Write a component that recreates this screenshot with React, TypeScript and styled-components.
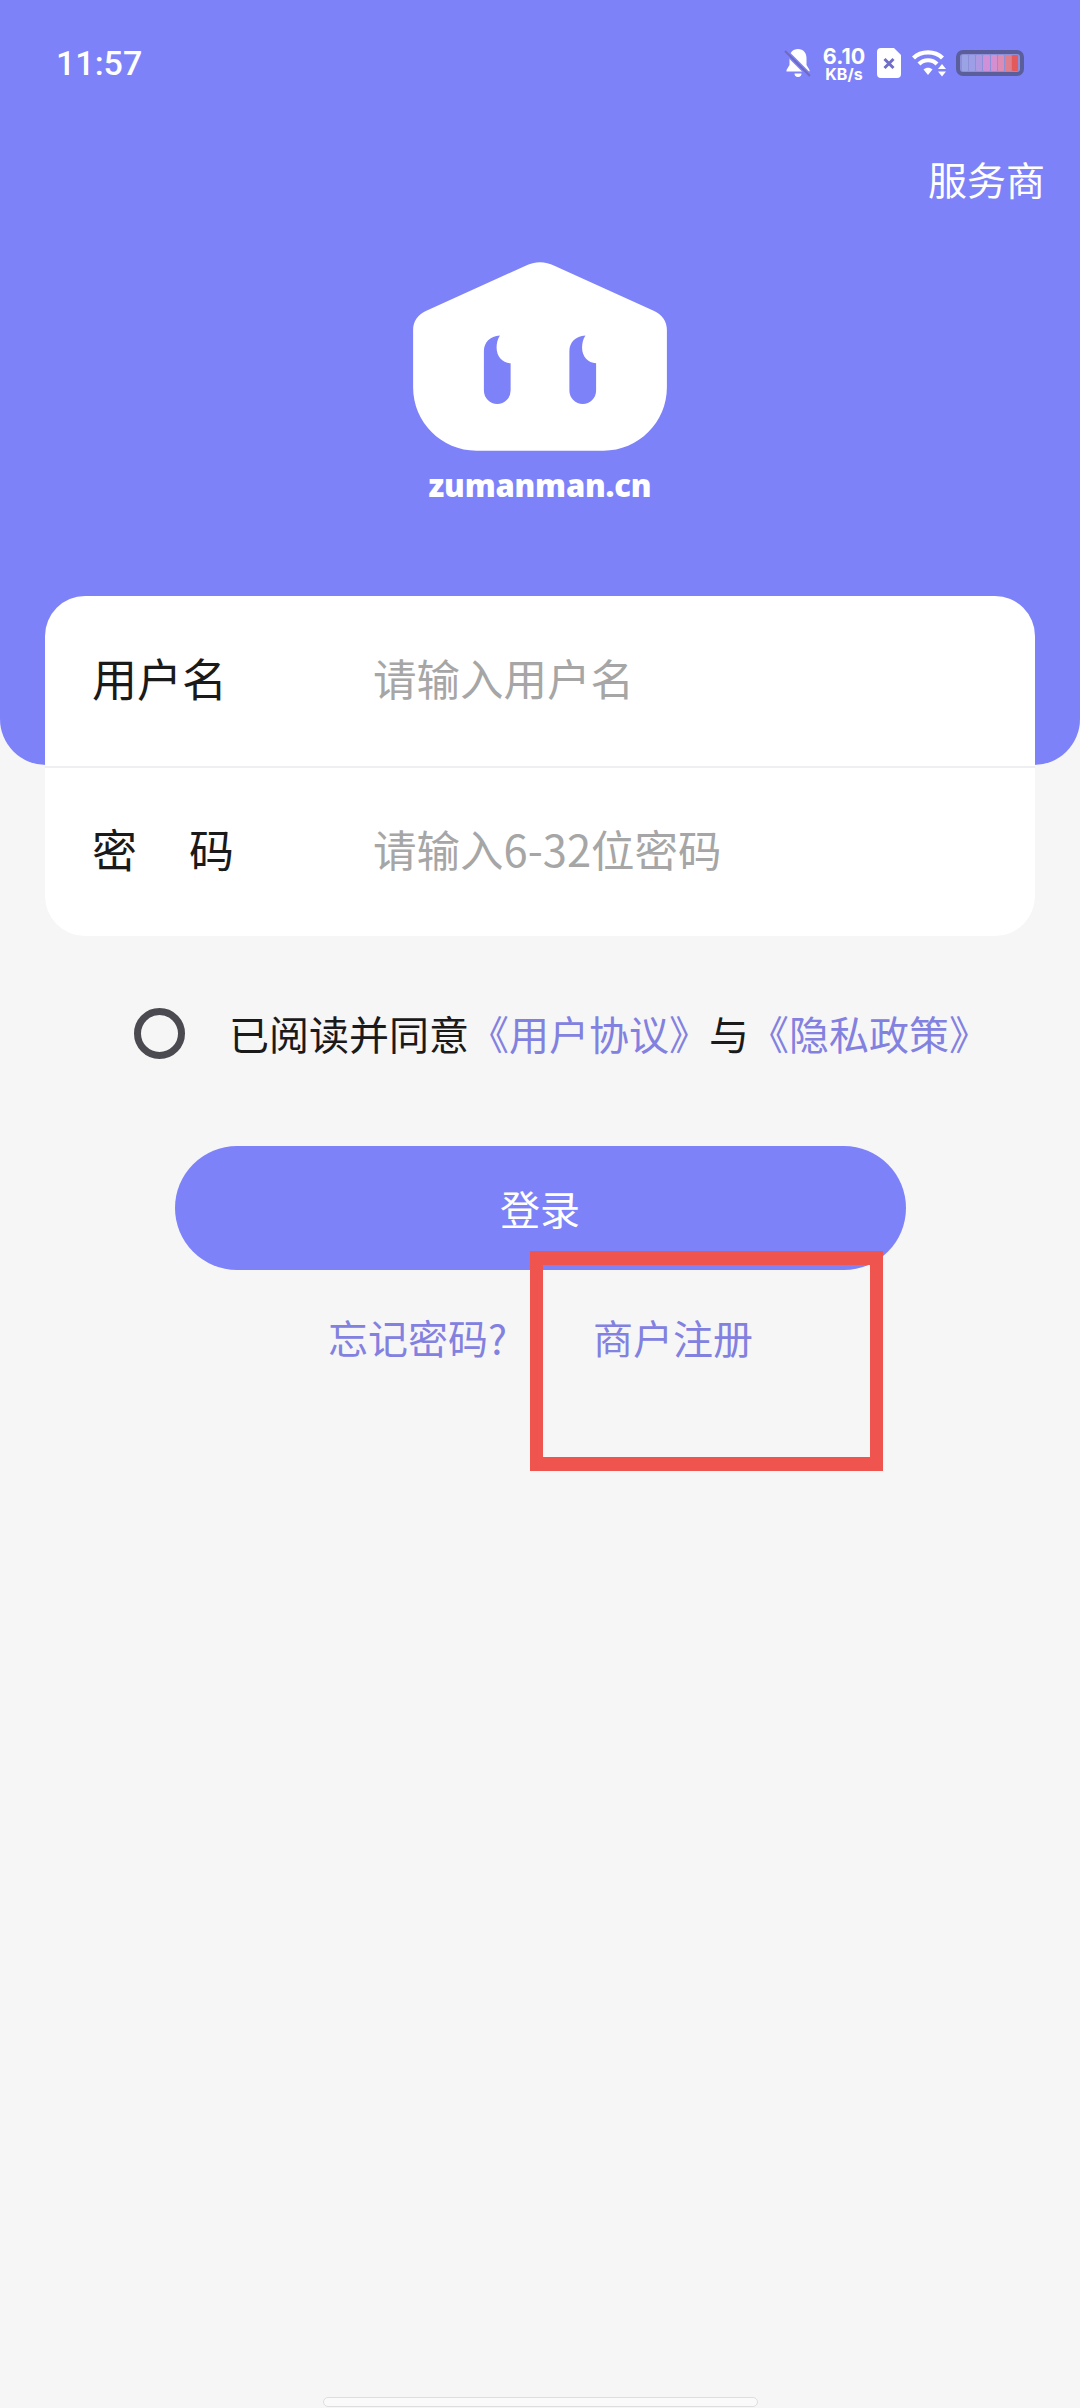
import React from "react";
import styled, { createGlobalStyle } from "styled-components";

const cjk = `"Noto Sans CJK SC", "Noto Sans", sans-serif`;
const brand = "#7e82f9";
const linkColor = "#8381e0";
const batteryCells = ["#9aa4e4", "#9c9fe6", "#ae98e2", "#cf90d8", "#d48fd0", "#dc8cb4", "#e07f8c", "#e4595c"];

const Global = createGlobalStyle`
  html, body { margin: 0; padding: 0; background: #f6f6f7; }
  * { box-sizing: border-box; }
`;

const Page = styled.div`
  position: relative;
  width: 1080px;
  height: 2408px;
  overflow: hidden;
  background: #f6f6f7;
  display: flex;
  flex-direction: column;
  font-family: ${cjk};
`;

const Header = styled.header`
  height: 765px;
  flex: none;
  background: ${brand};
  border-radius: 0 0 46px 46px;
  display: flex;
  flex-direction: column;
`;

const StatusBar = styled.div`
  height: 46px;
  margin-top: 40px;
  padding: 0 56px 0 56px;
  display: flex;
  align-items: center;
  justify-content: space-between;
`;

const Clock = styled.span`
  font: 500 34px/46px Roboto, sans-serif;
  color: #fff;
`;

const StatusIcons = styled.div`
  display: flex;
  align-items: center;
`;

const Speed = styled.div`
  width: 44px;
  margin: 0 11px 0 10px;
  color: #fff;
  font-family: Inter, sans-serif;
  font-weight: 700;
  text-align: center;
  display: flex;
  flex-direction: column;
  align-items: center;
`;

const SpeedValue = styled.span`
  font-size: 21.500px;
  line-height: 22px;
`;

const SpeedUnit = styled.span`
  font-size: 16px;
  line-height: 15px;
`;

const WifiSlot = styled.div`
  margin-left: 10px;
  display: flex;
`;

const Battery = styled.div`
  width: 68px;
  height: 26px;
  margin-left: 9px;
  padding: 1px 2px;
  border: 4px solid #5a5f9c;
  border-radius: 7px;
  background: #8d8fd8;
  display: flex;
  gap: 1px;
`;

const BatteryCell = styled.i<{ $color: string }>`
  flex: 1;
  border-radius: 1px;
  background: ${(p) => p.$color};
`;

const ProviderRow = styled.div`
  margin-top: 64px;
  padding-right: 35px;
  display: flex;
  justify-content: flex-end;
`;

const Provider = styled.span`
  color: #fff;
  font-size: 39px;
  line-height: 56px;
`;

const LogoBlock = styled.div`
  margin-top: 56px;
  display: flex;
  flex-direction: column;
  align-items: center;
`;

const LogoMark = styled.svg`
  display: block;
  width: 254px;
  height: 189px;
`;

const LogoText = styled.span`
  margin-top: 12px;
  color: #fff;
  font: 800 31px/44px "Open Sans", sans-serif;
  letter-spacing: -0.2px;
`;

const Card = styled.section`
  position: relative;
  margin: -169px 45px 0;
  height: 340px;
  background: #fff;
  border-radius: 40px;
  overflow: hidden;
`;

const Field = styled.div`
  height: 170px;
  padding: 0 0 6px 47px;
  display: flex;
  align-items: center;
  & + & {
    border-top: 2px solid #efeff1;
  }
`;

const FieldLabel = styled.label`
  width: 281px;
  flex: none;
  color: #1a1a1a;
  font-size: 45px;
  line-height: 60px;
  white-space: pre;
  word-spacing: -3px;
`;

const Placeholder = styled.span`
  color: #a6a6a6;
  font-size: 43.500px;
  line-height: 60px;
`;

const Agreement = styled.div`
  margin-top: 67px;
  padding-left: 134px;
  height: 60px;
  display: flex;
  align-items: center;
`;

const Radio = styled.span`
  width: 51px;
  height: 51px;
  flex: none;
  border: 7px solid #4a4a50;
  border-radius: 50%;
  margin-right: 44px;
`;

const AgreementText = styled.p`
  margin: 0;
  color: #1a1a1a;
  font-size: 40px;
  line-height: 60px;
  white-space: nowrap;
`;

const LinkText = styled.span`
  color: ${linkColor};
`;

const LoginButton = styled.button`
  display: block;
  align-self: center;
  width: 731px;
  height: 124px;
  margin-top: 83px;
  border: 0;
  border-radius: 62px;
  background: ${brand};
  color: #fff;
  font-family: ${cjk};
  font-size: 40px;
`;

const Links = styled.div`
  margin-top: 37px;
  padding-left: 328px;
  display: flex;
  gap: 86px;
`;

const LinkItem = styled.a`
  color: ${linkColor};
  font-size: 40px;
  line-height: 60px;
`;

const Annotation = styled.div`
  position: absolute;
  left: 530px;
  top: 1251px;
  width: 353px;
  height: 220px;
  border: solid #f0544f;
  border-width: 14px 13px;
`;

const HomeBar = styled.div`
  position: absolute;
  left: 323px;
  top: 2397px;
  width: 435px;
  height: 10px;
  border-radius: 5px;
  background: #fafafa;
  border: 1px solid #dedede;
`;

const BellOff = () => (
  <svg width="28" height="30" viewBox="0 0 28 30">
    <path
      d="M14 1c5.500 0 8.500 4 8.500 9v7l3 5v1.500H2.500V22l3-5v-7C5.500 5 8.500 1 14 1zM10.500 25.500h7a3.500 3.500 0 0 1-7 0z"
      fill="#fff"
    />
    <path d="M1 3l25 25" stroke="#7e82f9" strokeWidth="5" />
    <path d="M1 3l25 25" stroke="#6f6bb8" strokeWidth="2" />
  </svg>
);

const SimCard = () => (
  <svg width="24" height="30" viewBox="0 0 24 30">
    <path
      d="M4 0h13l7 7v19a4 4 0 0 1-4 4H4a4 4 0 0 1-4-4V4a4 4 0 0 1 4-4z"
      fill="#fff"
    />
    <path d="M7.500 11l9 9M16.500 11l-9 9" stroke="#6f6fc8" strokeWidth="3" />
  </svg>
);

const Wifi = () => (
  <svg width="36" height="28" viewBox="0 0 36 28">
    <g fill="none" stroke="#fff" strokeWidth="4.200">
      <path d="M2.500 9C10 1.500 24 1.500 31.500 9" />
      <path d="M8 15C13 10 21 10 26 15" />
    </g>
    <path d="M12.500 20.500C15 18 19 18 21.500 20.500L17 26z" fill="#fff" />
    <path d="M31 15l4 5h-8zM31 27.500l4-5h-8z" fill="#fff" />
  </svg>
);

const Logo = () => (
  <LogoMark viewBox="100 65 760 566">
    <path
      fill="#fff"
      d="M437 76C465 62 495 62 523 76L822 212C845 223 860 243 860 268V440C860 545 775 630 670 630H290C185 630 100 545 100 440V268C100 243 115 223 138 212Z"
    />
    <path
      fill={brand}
      d="M360 285C330 287 312 306 312 332V450A40 40 0 0 0 392 450V368C368 368 350 348 350 322C350 308 353 296 360 285Z"
    />
    <path
      fill={brand}
      d="M616 285C586 287 568 306 568 332V450A40 40 0 0 0 648 450V368C624 368 606 348 606 322C606 308 609 296 616 285Z"
    />
  </LogoMark>
);

export default function App() {
  return (
    <Page>
      <Global />
      <Header>
        <StatusBar>
          <Clock>11:57</Clock>
          <StatusIcons>
            <BellOff />
            <Speed>
              <SpeedValue>6.10</SpeedValue>
              <SpeedUnit>KB/s</SpeedUnit>
            </Speed>
            <SimCard />
            <WifiSlot>
              <Wifi />
            </WifiSlot>
            <Battery>
              {batteryCells.map((color) => (
                <BatteryCell key={color} $color={color} />
              ))}
            </Battery>
          </StatusIcons>
        </StatusBar>
        <ProviderRow>
          <Provider>服务商</Provider>
        </ProviderRow>
        <LogoBlock>
          <Logo />
          <LogoText>zumanman.cn</LogoText>
        </LogoBlock>
      </Header>
      <Card>
        <Field>
          <FieldLabel>用户名</FieldLabel>
          <Placeholder>请输入用户名</Placeholder>
        </Field>
        <Field>
          <FieldLabel>{"密　 码"}</FieldLabel>
          <Placeholder>请输入6-32位密码</Placeholder>
        </Field>
      </Card>
      <Agreement>
        <Radio />
        <AgreementText>
          已阅读并同意<LinkText>《用户协议》</LinkText>与<LinkText>《隐私政策》</LinkText>
        </AgreementText>
      </Agreement>
      <LoginButton>登录</LoginButton>
      <Links>
        <LinkItem>忘记密码?</LinkItem>
        <LinkItem>商户注册</LinkItem>
      </Links>
      <Annotation />
      <HomeBar />
    </Page>
  );
}
